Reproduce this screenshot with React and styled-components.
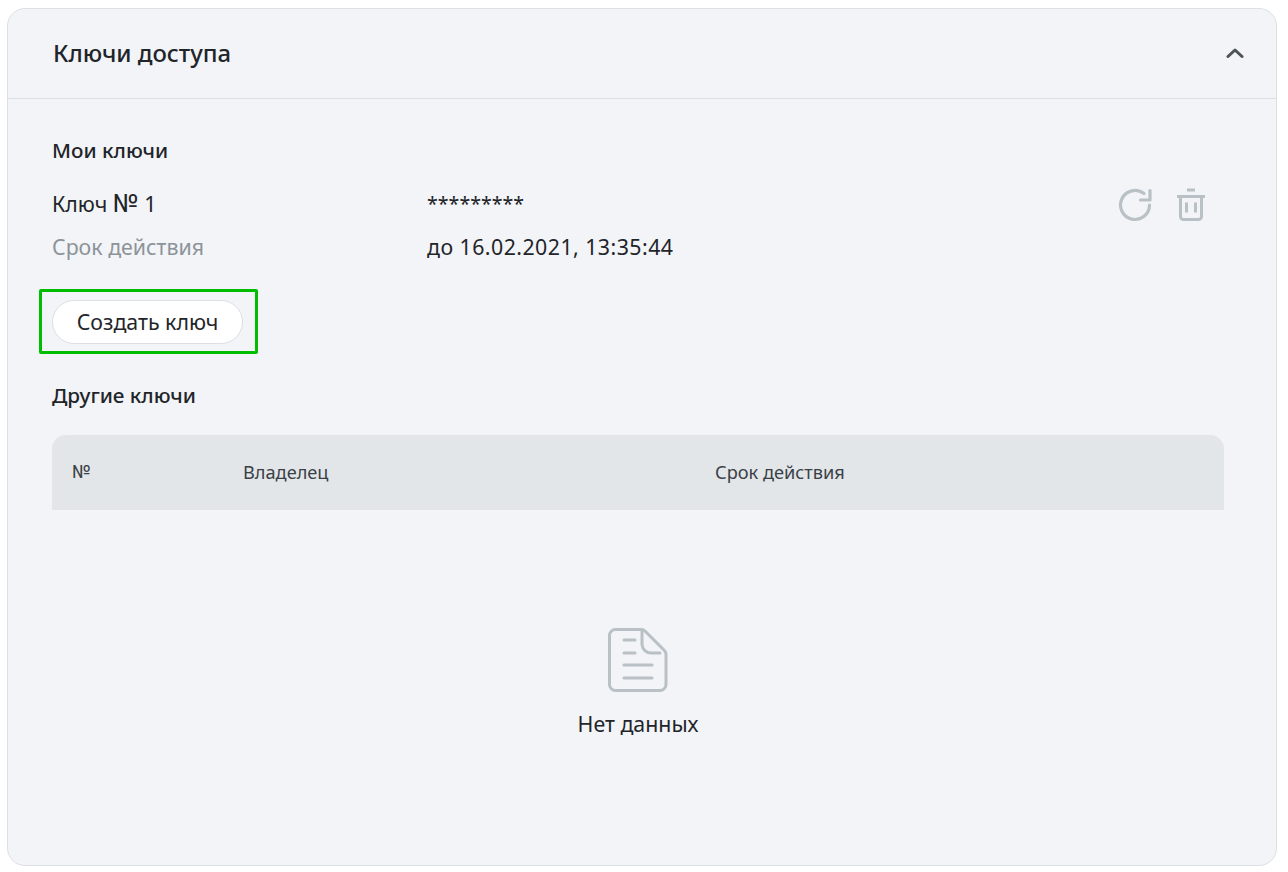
import React from 'react';
import styled, { createGlobalStyle } from 'styled-components';

const GlobalStyle = createGlobalStyle`
  html, body {
    margin: 0;
    padding: 0;
    background: #fff;
    font-family: "Noto Sans", "Open Sans", sans-serif;
    color: #1f2529;
  }
`;

const Page = styled.div`
  padding: 8px 11px 6px 7px;
`;

const Card = styled.section`
  height: 858px;
  box-sizing: border-box;
  background: #f2f4f8;
  border: 1px solid #dcdfe4;
  border-radius: 18px;
  display: flex;
  flex-direction: column;
`;

const Header = styled.header`
  height: 90px;
  flex: none;
  box-sizing: border-box;
  padding: 0 32px 2px 45px;
  border-bottom: 1px solid #dcdfe4;
  display: flex;
  align-items: center;
  justify-content: space-between;
`;

const Title = styled.h2`
  margin: 0;
  font-size: 23.9px;
  font-weight: 500;
  line-height: 30px;
`;

const Body = styled.div`
  padding: 37px 52px 0 44px;
  flex: 1;
  display: flex;
  flex-direction: column;
`;

const Subtitle = styled.h3`
  margin: 0;
  font-size: 20.7px;
  font-weight: 500;
  line-height: 28px;
`;

const KeyBlock = styled.div`
  margin-top: 18px;
  position: relative;
`;

const KeyRow = styled.div`
  display: grid;
  grid-template-columns: 375px 1fr;
  height: 43px;
  align-items: center;
  font-size: 21.33px;
`;

const Label = styled.span`
  color: ${(p) => (p.$muted ? '#8d9399' : '#1f2529')};
`;

const NumberSign = styled.span`
  font-family: Roboto, "Noto Sans", sans-serif;
  font-size: ${(p) => p.$size || '1em'};
`;

const Value = styled.span`
  color: #1f2529;
  letter-spacing: 0.45px;
`;

const Mask = styled.span`
  color: #1f2529;
  font-size: 19.6px;
`;

const Actions = styled.div`
  position: absolute;
  top: 5px;
  right: 18px;
  display: flex;
  gap: 23px;
  align-items: center;
`;

const CreateFrame = styled.div`
  align-self: flex-start;
  margin: 21px 0 0 -13px;
  padding: 8px 12px 7px 10px;
  border: 3px solid #00bd00;
  border-radius: 2px;
`;

const CreateButton = styled.button`
  width: 191px;
  height: 44px;
  box-sizing: border-box;
  display: block;
  background: #fff;
  border: 1px solid #dcdfe4;
  border-radius: 22px;
  font-family: inherit;
  font-size: 21.33px;
  color: #1f2529;
  padding: 0 0 2px;
`;

const OthersTitle = styled(Subtitle)`
  margin-top: 27px;
`;

const TableHead = styled.div`
  margin-top: 26px;
  height: 75px;
  box-sizing: border-box;
  padding: 0 0 2px 20px;
  background: #e3e6e9;
  border-radius: 14px 14px 0 0;
  display: grid;
  grid-template-columns: 171px 472px 1fr;
  align-items: center;
  font-size: 18.2px;
  color: #3a4045;
`;

const Empty = styled.div`
  margin-top: 117px;
  display: flex;
  flex-direction: column;
  align-items: center;
  gap: 16px;
  font-size: 21.33px;
  color: #1f2529;
`;

const Chevron = () => (
  <svg width="18" height="12" viewBox="0 0 18 12" fill="none">
    <path d="M2 9.500 9 3l7 6.500" stroke="#4d5358" strokeWidth="3" strokeLinecap="round" strokeLinejoin="round" />
  </svg>
);

const RefreshIcon = () => (
  <svg width="36" height="36" viewBox="0 0 36 36" fill="none" stroke="#b9c0c6" strokeWidth="3.2">
    <path d="M32.500 18A14.500 14.500 0 1 1 27 6.600" strokeLinecap="round" />
    <path d="M33 3.500V13H23.500" strokeLinejoin="round" strokeLinecap="round" />
  </svg>
);

const TrashIcon = () => (
  <svg width="30" height="36" viewBox="0 0 30 36" fill="none" stroke="#b9c0c6" strokeWidth="3">
    <path d="M11 3h8" />
    <path d="M1 9.500h28" />
    <path d="M4.500 10v19.500a3 3 0 0 0 3 3h15a3 3 0 0 0 3-3V10" />
    <path d="M10.500 15.500v10M19.500 15.500v10" />
  </svg>
);

const DocIcon = () => (
  <svg width="62" height="66" viewBox="0 0 62 66" fill="none" stroke="#b9c0c6" strokeWidth="3" strokeLinecap="round" strokeLinejoin="round">
    <path d="M8.500 2.500H34c1.600 0 3.100.6 4.200 1.700l19 19c1.100 1.100 1.800 2.700 1.800 4.300v30a6 6 0 0 1-6 6H8.500a6 6 0 0 1-6-6v-49a6 6 0 0 1 6-6Z" />
    <path d="M35 3v14a9 9 0 0 0 9 9h9" />
    <path d="M17 13h11M17 26h11M17 38h28M17 51h28" />
  </svg>
);

const App = () => (
  <Page>
    <GlobalStyle />
    <Card>
      <Header>
        <Title>Ключи доступа</Title>
        <Chevron />
      </Header>
      <Body>
        <Subtitle>Мои ключи</Subtitle>
        <KeyBlock>
          <KeyRow>
            <Label>Ключ <NumberSign $size="1.18em">№</NumberSign> 1</Label>
            <Mask>*********</Mask>
          </KeyRow>
          <KeyRow>
            <Label $muted>Срок действия</Label>
            <Value>до 16.02.2021, 13:35:44</Value>
          </KeyRow>
          <Actions>
            <RefreshIcon />
            <TrashIcon />
          </Actions>
        </KeyBlock>
        <CreateFrame>
          <CreateButton>Создать ключ</CreateButton>
        </CreateFrame>
        <OthersTitle>Другие ключи</OthersTitle>
        <TableHead>
          <NumberSign>№</NumberSign>
          <span>Владелец</span>
          <span>Срок действия</span>
        </TableHead>
        <Empty>
          <DocIcon />
          <span>Нет данных</span>
        </Empty>
      </Body>
    </Card>
  </Page>
);

export default App;
